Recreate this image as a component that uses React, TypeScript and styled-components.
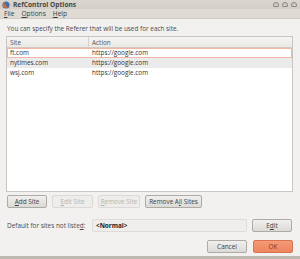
import React from "react";
import styled, { createGlobalStyle } from "styled-components";

const Global = createGlobalStyle`
  html, body { margin: 0; padding: 0; background: #f2f1f0; }
  * { box-sizing: border-box; }
`;

const Window = styled.div`
  width: 300px;
  height: 259px;
  display: flex;
  flex-direction: column;
  background: #f2f1f0;
  font-family: "Open Sans", "Noto Sans", sans-serif;
  font-size: 6.4px;
  color: #3c3c3c;
  border-bottom: 3px solid #bdb9b1;
  overflow: hidden;
`;

const TitleBar = styled.div`
  height: 11px;
  display: flex;
  align-items: center;
  padding: 0 3px 0 2px;
  background: linear-gradient(#d9d5cf, #d3cfc8);
  gap: 3px;
`;

const Title = styled.div`
  flex: 1;
  font-weight: 700;
  font-size: 6.6px;
  color: #4a4843;
`;

const WinButtons = styled.div`
  display: flex;
  gap: 3px;
`;

const WinBtn = styled.span`
  width: 6px;
  height: 5px;
  border-radius: 3px 3px 1px 1px;
  border: 1px solid #8d8a85;
  background: #cfcbc4;
`;

const MenuBar = styled.div`
  height: 10px;
  display: flex;
  align-items: center;
  gap: 7px;
  padding: 0 4px;
  background: #dfdbd4;
  border-bottom: 1px solid #d0ccc5;
  font-size: 6.6px;
  color: #3c3c3c;
`;

const Body = styled.div`
  flex: 1;
  display: flex;
  flex-direction: column;
  padding: 4px 7px 4px 6px;
`;

const Intro = styled.div`
  height: 11px;
  line-height: 11px;
  padding-left: 1px;
  color: #4a4a4a;
`;

const ListBox = styled.div`
  margin-top: 2px;
  height: 156px;
  background: #ffffff;
  border: 1px solid #c9c6c1;
  display: flex;
  flex-direction: column;
`;

const Header = styled.div`
  height: 11px;
  display: grid;
  grid-template-columns: 82px 1fr;
  background: linear-gradient(#f6f5f4, #ebe9e6);
  border-bottom: 1px solid #d5c9c2;
`;

const HeadCell = styled.div<{ $divider?: boolean }>`
  padding-left: 3px;
  line-height: 11px;
  color: #555;
  border-right: ${(p) => (p.$divider ? "1px solid #d6d3ce" : "none")};
`;

const Row = styled.div<{ $alt?: boolean; $focus?: boolean }>`
  height: 10px;
  display: grid;
  grid-template-columns: 82px 1fr;
  background: ${(p) => (p.$alt ? "#ebebeb" : "#ffffff")};
  outline: ${(p) => (p.$focus ? "1px solid #efb7a4" : "none")};
  outline-offset: -1px;
  color: #333;
`;

const Cell = styled.div`
  padding-left: 3px;
  line-height: 10px;
`;

const ButtonRow = styled.div`
  display: flex;
  gap: 5px;
  margin-top: 3px;
  padding-left: 1px;
`;

const Button = styled.button<{ $w: number; $disabled?: boolean; $primary?: boolean }>`
  width: ${(p) => p.$w}px;
  height: 13px;
  padding: 0;
  font-family: inherit;
  font-size: 6.4px;
  border-radius: 2px;
  border: 1px solid ${(p) => (p.$primary ? "#d7734f" : p.$disabled ? "#dcdad6" : "#aeaba6")};
  background: ${(p) =>
    p.$primary
      ? "linear-gradient(#f59a77, #ee8560)"
      : p.$disabled
      ? "#eeedeb"
      : "linear-gradient(#f1f0ee, #dcdad6)"};
  color: ${(p) => (p.$primary ? "#7a3a25" : p.$disabled ? "#b5b3af" : "#3c3c3c")};
  u { text-decoration: underline; }
`;

const DefaultRow = styled.div`
  display: flex;
  align-items: center;
  margin-top: 11px;
  padding-left: 1px;
  gap: 0;
`;

const Label = styled.span`
  width: 85px;
  color: #4a4a4a;
`;

const TextBox = styled.div`
  width: 155px;
  height: 13px;
  line-height: 11px;
  border: 1px solid #dedcd8;
  border-radius: 2px;
  background: #efeeec;
  padding-left: 3px;
  font-weight: 700;
  color: #222;
  margin-right: 5px;
`;

const Footer = styled.div`
  display: flex;
  justify-content: flex-end;
  gap: 6px;
  margin-top: 8px;
`;

const FoxIcon = () => (
  <svg width="8" height="8" viewBox="0 0 8 8">
    <circle cx="4" cy="4" r="3.6" fill="#3f6fb0" />
    <path d="M0.6 4.5 C1 7.5 6.5 8 7.5 4.2 C7 6 5 6.2 4 5.4 C5 4 3 2.6 1.6 3.2 C2 2 3 1.2 4.4 1 C2 0.5 0.3 2.5 0.6 4.5 Z" fill="#e66a1f" />
  </svg>
);

export default function App() {
  return (
    <>
      <Global />
      <Window>
        <TitleBar>
          <FoxIcon />
          <Title>RefControl Options</Title>
          <WinButtons>
            <WinBtn />
            <WinBtn />
            <WinBtn />
          </WinButtons>
        </TitleBar>
        <MenuBar>
          <span><u>F</u>ile</span>
          <span><u>O</u>ptions</span>
          <span><u>H</u>elp</span>
        </MenuBar>
        <Body>
          <Intro>You can specify the Referer that will be used for each site.</Intro>
          <ListBox>
            <Header>
              <HeadCell $divider>Site</HeadCell>
              <HeadCell>Action</HeadCell>
            </Header>
            <Row $focus>
              <Cell>ft.com</Cell>
              <Cell>https://google.com</Cell>
            </Row>
            <Row $alt>
              <Cell>nytimes.com</Cell>
              <Cell>https://google.com</Cell>
            </Row>
            <Row>
              <Cell>wsj.com</Cell>
              <Cell>https://google.com</Cell>
            </Row>
          </ListBox>
          <ButtonRow>
            <Button $w={40}><u>A</u>dd Site</Button>
            <Button $w={41} $disabled><u>E</u>dit Site</Button>
            <Button $w={42} $disabled><u>R</u>emove Site</Button>
            <Button $w={57}>Remove A<u>l</u>l Sites</Button>
          </ButtonRow>
          <DefaultRow>
            <Label>Default for sites not liste<u>d</u>:</Label>
            <TextBox>&lt;Normal&gt;</TextBox>
            <Button $w={40}>E<u>d</u>it</Button>
          </DefaultRow>
          <Footer>
            <Button $w={40}>Cancel</Button>
            <Button $w={40} $primary>OK</Button>
          </Footer>
        </Body>
      </Window>
    </>
  );
}
